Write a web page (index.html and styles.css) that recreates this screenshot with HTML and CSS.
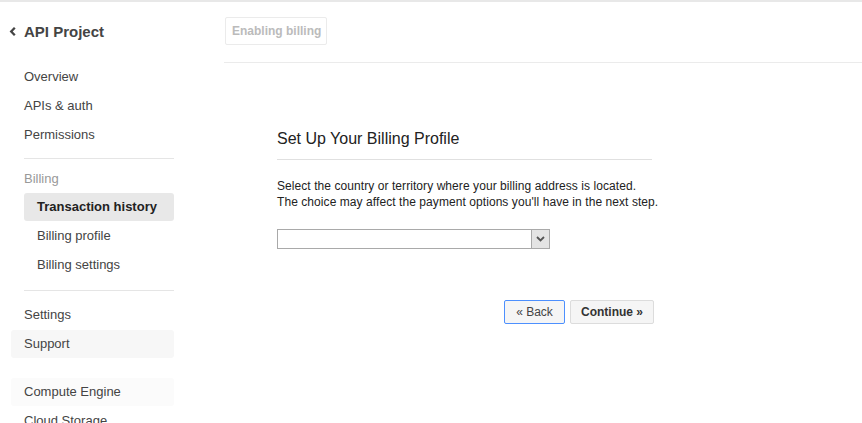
FILE: index.html
```html
<!DOCTYPE html>
<html>
<head>
<meta charset="utf-8">
<link rel="stylesheet" href="styles.css">
</head>
<body>
<div class="page">
  <aside class="sidebar">
    <div class="project">
      <svg class="chev" width="7" height="11" viewBox="0 0 7 11"><path d="M5.8 1.8 L2.2 5.5 L5.8 9.2" fill="none" stroke="#444" stroke-width="2.3"/></svg>
      <span>API Project</span>
    </div>
    <nav class="nav">
      <a class="item">Overview</a>
      <a class="item">APIs &amp; auth</a>
      <a class="item">Permissions</a>
      <div class="divider first"></div>
      <div class="item section">Billing</div>
      <a class="item sub active">Transaction history</a>
      <a class="item sub">Billing profile</a>
      <a class="item sub">Billing settings</a>
      <div class="divider second"></div>
      <a class="item">Settings</a>
      <a class="item boxed">Support</a>
      <div class="gap"></div>
      <a class="item boxed light">Compute Engine</a>
      <a class="item">Cloud Storage</a>
    </nav>
  </aside>
  <main class="main">
    <header class="header">
      <span class="crumb">Enabling billing</span>
    </header>
    <section class="content">
      <h1 class="title">Set Up Your Billing Profile</h1>
      <p class="desc">Select the country or territory where your billing address is located.<br>The choice may affect the payment options you'll have in the next step.</p>
      <div class="select">
        <span class="select-field"></span>
        <span class="select-arrow"><svg width="9" height="6" viewBox="0 0 9 6"><path d="M1 1 L4.5 4.5 L8 1" fill="none" stroke="#555" stroke-width="1.8"/></svg></span>
      </div>
      <div class="actions">
        <button class="btn back">« Back</button>
        <button class="btn primary">Continue »</button>
      </div>
    </section>
  </main>
</div>
</body>
</html>
```
FILE: styles.css
```css
html, body {
  margin: 0;
  padding: 0;
  background: #fff;
}
body {
  font-family: "Liberation Sans", Arial, sans-serif;
  color: #444;
  border-top: 2px solid #e8e8e8;
  height: 421px;
  overflow: hidden;
}
.page {
  display: flex;
}
.sidebar {
  width: 163px;
  padding-left: 11px;
  flex: none;
}
.project {
  display: flex;
  align-items: center;
  height: 28px;
  margin-top: 15px;
  margin-left: -2px;
  font-size: 15px;
  font-weight: bold;
  color: #444;
}
.chev {
  margin-right: 8px;
}
.nav {
  display: flex;
  flex-direction: column;
  margin-top: 18px;
}
.item {
  display: block;
  height: 28px;
  line-height: 28px;
  margin-bottom: 1px;
  padding-left: 13px;
  font-size: 13px;
  color: #444;
  border-radius: 3px;
  white-space: nowrap;
}
.divider {
  height: 1px;
  background: #e5e5e5;
  margin-left: 13px;
}
.divider.first {
  margin-top: 8px;
  margin-bottom: 6px;
}
.divider.second {
  margin-top: 10px;
  margin-bottom: 10px;
}
.section {
  color: #999;
  height: 27px;
  line-height: 27px;
}
.sub {
  margin-left: 13px;
  padding-left: 13px;
}
.active {
  background: #e8e8e8;
  color: #222;
  font-weight: bold;
}
.boxed {
  background: #f7f7f7;
}
.boxed.light {
  background: #fbfbfb;
}
.gap {
  height: 19px;
}
.main {
  flex: 1;
  margin-left: 50px;
}
.header {
  height: 61px;
  border-bottom: 1px solid #ebebeb;
  display: flex;
  align-items: flex-start;
  padding-top: 15px;
  box-sizing: border-box;
}
.crumb {
  margin-left: 1px;
  height: 26px;
  line-height: 26px;
  padding: 0 5px 0 6px;
  border: 1px solid #ebebeb;
  border-radius: 2px;
  font-size: 12px;
  font-weight: bold;
  color: #bbb;
}
.content {
  width: 377px;
  margin-left: 53px;
  padding-top: 67px;
}
.title {
  margin: 0;
  width: 375px;
  font-size: 16px;
  font-weight: normal;
  color: #222;
  padding-bottom: 11px;
  border-bottom: 1px solid #e0e0e0;
}
.desc {
  margin: 18px 0 0;
  font-size: 12px;
  line-height: 16px;
  color: #222;
  letter-spacing: 0.07px;
  white-space: nowrap;
}
.select {
  display: flex;
  width: 273px;
  height: 20px;
  margin-top: 19px;
  border: 1px solid #a9a9a9;
  box-sizing: border-box;
}
.select-field {
  flex: 1;
}
.select-arrow {
  width: 17px;
  background: #e4e4e4;
  border-left: 1px solid #a9a9a9;
  display: flex;
  align-items: center;
  justify-content: center;
}
.actions {
  display: flex;
  justify-content: flex-end;
  gap: 5px;
  margin-top: 51px;
}
.btn {
  font-family: "Liberation Sans", Arial, sans-serif;
  font-size: 12px;
  height: 24px;
  padding: 0;
  background: #f5f5f5;
  border: 1px solid #dcdcdc;
  border-radius: 2px;
  color: #444;
}
.btn.back {
  border-color: #4d90fe;
  width: 61px;
}
.btn.primary {
  font-weight: bold;
  color: #333;
  width: 84px;
}
```
